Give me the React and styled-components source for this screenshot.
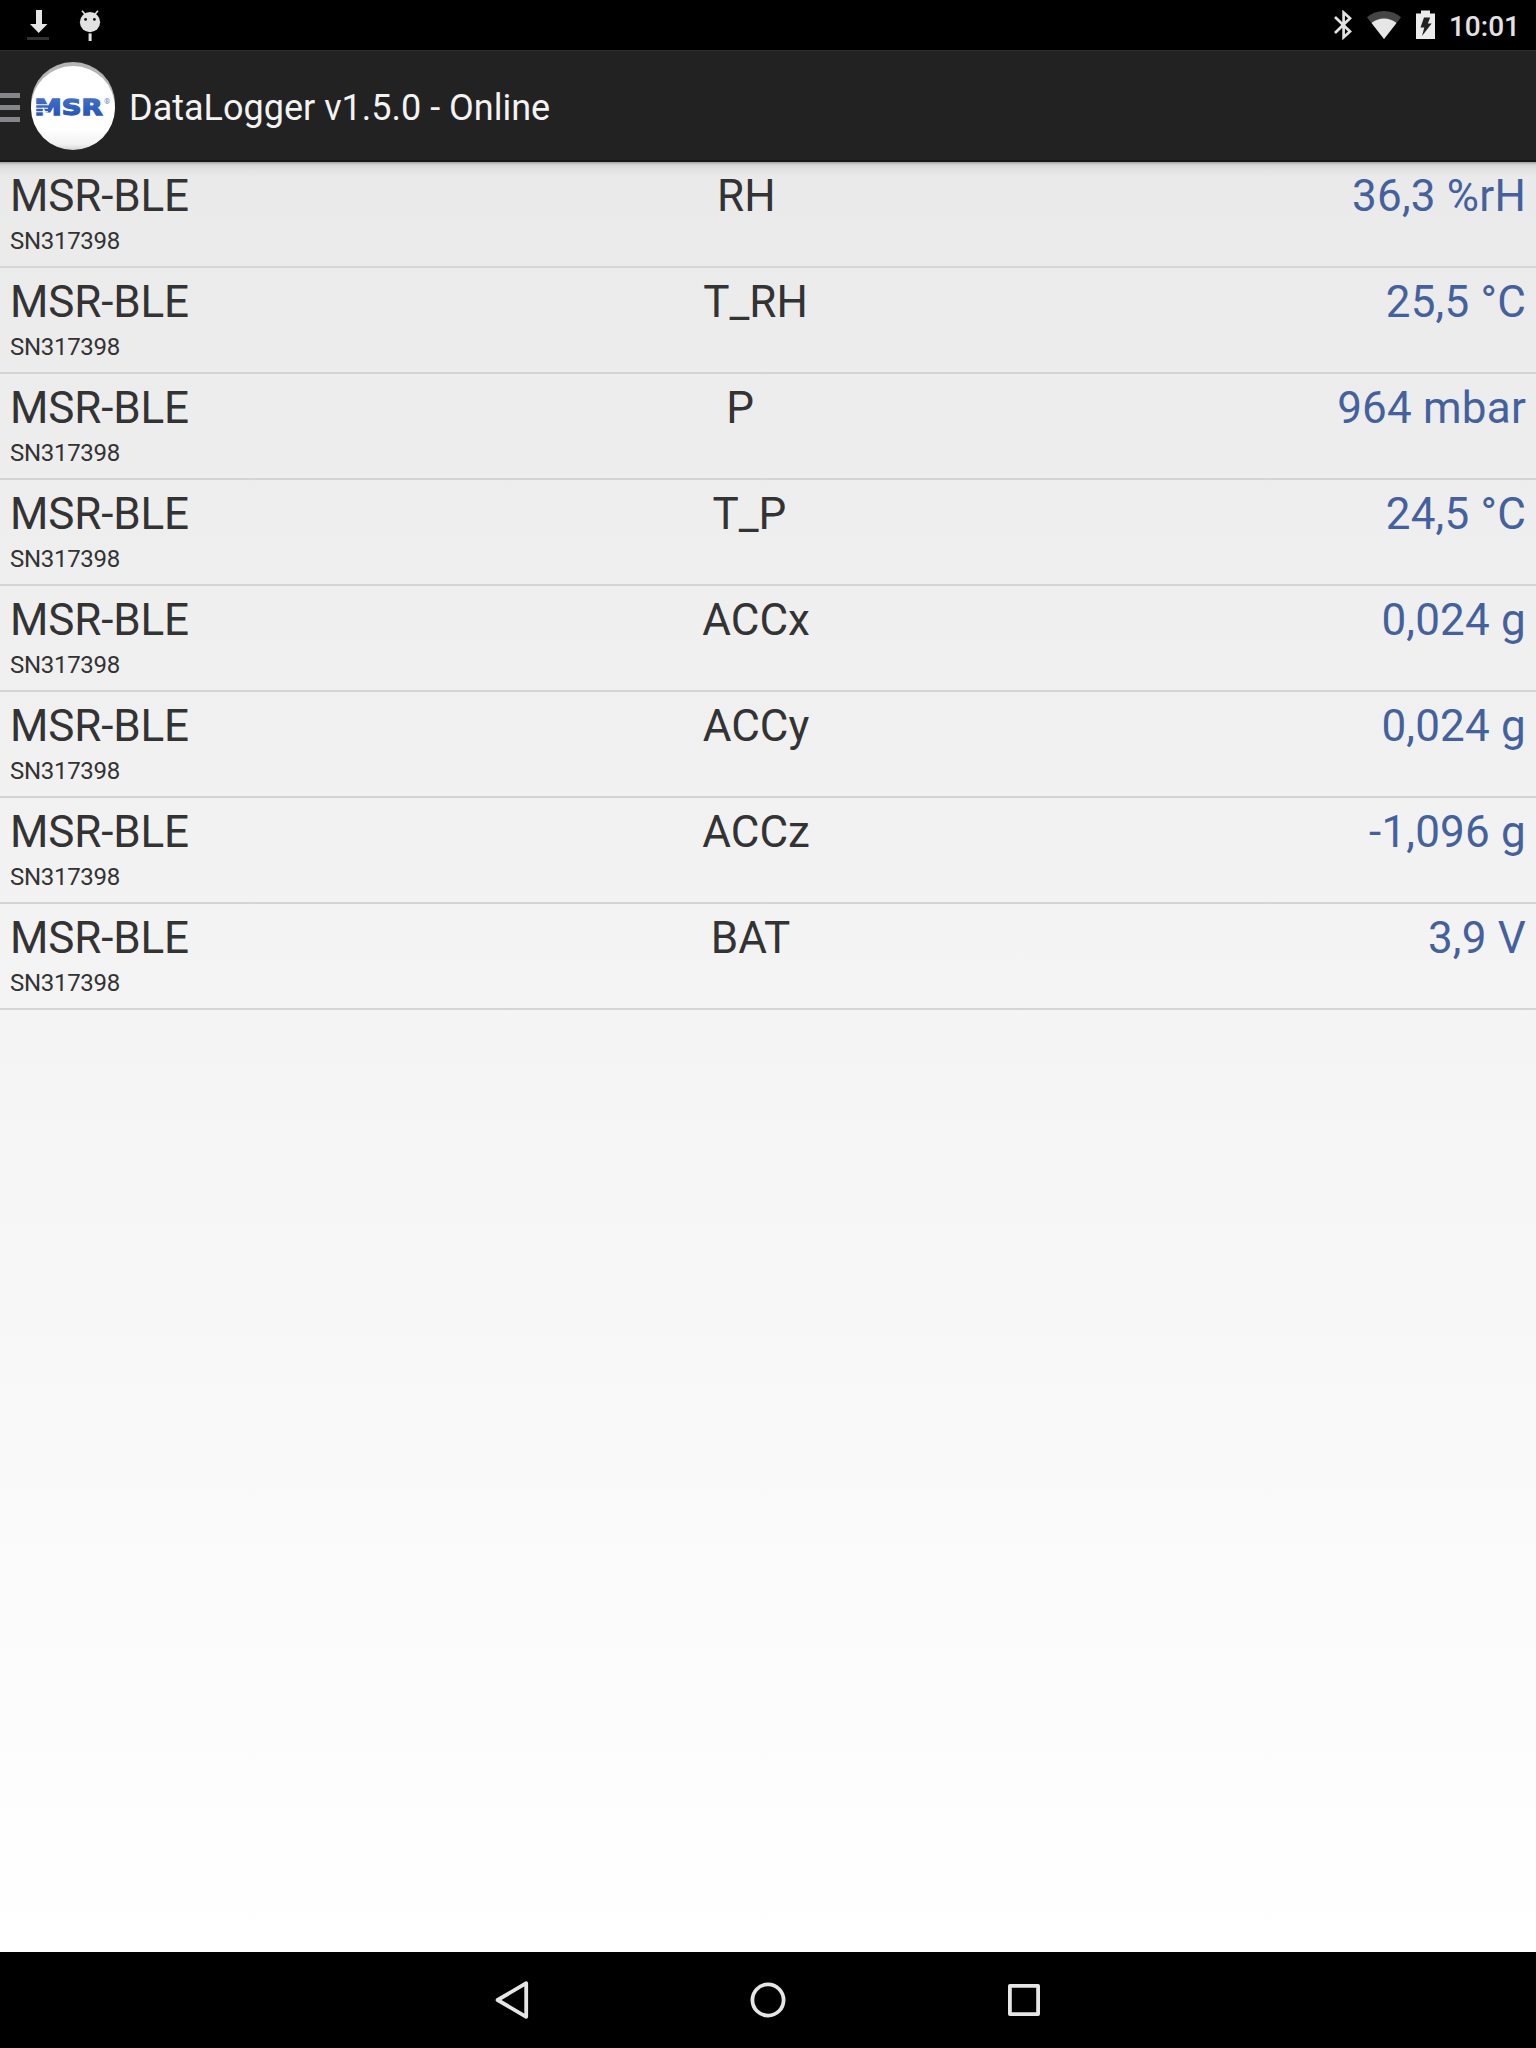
import styled, { createGlobalStyle } from 'styled-components';

const readings = [
  { id: 1, channel: 'RH', value: '36,3 %rH' },
  { id: 2, channel: 'T_RH', value: '25,5 °C' },
  { id: 3, channel: 'P', value: '964 mbar' },
  { id: 4, channel: 'T_P', value: '24,5 °C' },
  { id: 5, channel: 'ACCx', value: '0,024 g' },
  { id: 6, channel: 'ACCy', value: '0,024 g' },
  { id: 7, channel: 'ACCz', value: '-1,096 g' },
  { id: 8, channel: 'BAT', value: '3,9 V' },
];

function StatusBar() {
  return (
    <StatusDiv>
      <svg width='22' height='30' viewBox='0 0 22 30'>
        <path d='M9 0h6v14h5.5L11.7 23 3 14h6z' fill='#e6e6e6' />
        <rect x='0' y='27' width='22' height='3' fill='#303030' />
      </svg>
      <svg width='22' height='32' viewBox='0 0 22 32'>
        <g fill='#e2e2e2'>
          <circle cx='11' cy='12.2' r='10.1' />
          <path d='M3 0.8l3.5 4M19 0.8l-3.5 4' stroke='#e2e2e2' strokeWidth='1.6' />
          <rect x='9.6' y='23.4' width='3' height='7.6' />
        </g>
        <circle cx='6.6' cy='9.4' r='1.4' fill='#111' />
        <circle cx='15.4' cy='9.4' r='1.4' fill='#111' />
      </svg>
      <Spacer />
      <StatusIcons>
        <svg width='18' height='30' viewBox='0 0 18 30'>
          <path
            d='M1 7L16 21.5 9.6 27.3V2.5L16 8.3 1 23'
            fill='none'
            stroke='#e2e2e2'
            strokeWidth='2.7'
          />
        </svg>
        <svg width='34' height='30' viewBox='0 0 34 30'>
          <path d='M17 29L0 7.3C9.5-1.2 24.5-1.2 34 7.3z' fill='#454545' />
          <path d='M17 29L4.5 13C11.5 7 22.5 7 29.5 13z' fill='#e6e6e6' />
        </svg>
        <svg width='19' height='30' viewBox='0 0 19 30'>
          <path d='M5 0.5h9v3h5V29H0V3.5h5z' fill='#ececec' />
          <path d='M8 7.5h6.2l-2.4 6h3.9L6 26l2.3-8.5H4.5z' fill='#222' />
        </svg>
      </StatusIcons>
      <Clock>10:01</Clock>
    </StatusDiv>
  );
}

function Logo() {
  return (
    <LogoSvg width='84' height='90' viewBox='0 0 84 90'>
      <defs>
        <linearGradient id='disc' x1='0' y1='0' x2='0' y2='1'>
          <stop offset='0.75' stopColor='#fff' />
          <stop offset='0.93' stopColor='#f2f2f2' />
          <stop offset='1' stopColor='#d4d4d4' />
        </linearGradient>
        <linearGradient id='ink' x1='0' y1='0' x2='0' y2='1'>
          <stop offset='0' stopColor='#4a74c4' />
          <stop offset='1' stopColor='#1f50b8' />
        </linearGradient>
      </defs>
      <circle cx='42' cy='42' r='42' fill='#b4b4b4' />
      <circle cx='42' cy='46' r='42' fill='url(#disc)' />
      <LogoText
        x='3.5'
        y='52.5'
        textLength='68'
        lengthAdjust='spacingAndGlyphs'
        fill='url(#ink)'
        stroke='url(#ink)'
      >
        MSR
      </LogoText>
      <path d='M4 42.7h13M4 46.2h13M4 49.7h13' stroke='#fff' strokeWidth='1.1' />
      <Registered x='73' y='41.5'>
        ®
      </Registered>
    </LogoSvg>
  );
}

function Row({ reading }) {
  return (
    <RowDiv>
      <Device>
        <Name>MSR-BLE</Name>
        <Serial>SN317398</Serial>
      </Device>
      <Channel>{reading.channel}</Channel>
      <Value>{reading.value}</Value>
    </RowDiv>
  );
}

function NavBar() {
  return (
    <NavDiv>
      <NavButton aria-label='back'>
        <svg width='40' height='40' viewBox='0 0 40 40'>
          <path d='M34.2 3.2v33.6L5.6 20z' />
        </svg>
      </NavButton>
      <NavButton aria-label='home'>
        <svg width='40' height='40' viewBox='0 0 40 40'>
          <circle cx='20' cy='20' r='15.6' />
        </svg>
      </NavButton>
      <NavButton aria-label='recent'>
        <svg width='40' height='40' viewBox='0 0 40 40'>
          <rect x='5.9' y='5.9' width='28.2' height='28.2' />
        </svg>
      </NavButton>
    </NavDiv>
  );
}

function App() {
  return (
    <>
      <GlobalStyle />
      <Screen>
        <StatusBar />
        <ActionBar>
          <Drawer>
            <span />
            <span />
            <span />
          </Drawer>
          <Logo />
          <Title>DataLogger v1.5.0 - Online</Title>
        </ActionBar>
        <List>
          {readings.map((el) => (
            <Row key={el.id} reading={el} />
          ))}
        </List>
        <NavBar />
      </Screen>
    </>
  );
}

export default App;

const GlobalStyle = createGlobalStyle`
  * {
    box-sizing: border-box;
  }
  body {
    margin: 0;
    font-family: Roboto, sans-serif;
  }
  svg {
    display: block;
    flex-shrink: 0;
  }
`;

const Screen = styled.div`
  display: flex;
  flex-direction: column;
  width: 1536px;
  height: 2048px;
  overflow: hidden;
  background: linear-gradient(#e8e8e8, #ffffff 1952px);
`;

const StatusDiv = styled.div`
  display: flex;
  align-items: flex-start;
  height: 50px;
  padding: 10px 16px 0 27px;
  background-color: #000;
  > svg + svg {
    margin-left: 30px;
  }
`;

const Spacer = styled.div`
  flex: 1;
`;

const StatusIcons = styled.div`
  display: flex;
  gap: 15px;
  margin-right: 14px;
`;

const Clock = styled.span`
  font-size: 28px;
  font-weight: 500;
  line-height: 34px;
  color: #e2e2e2;
`;

const ActionBar = styled.div`
  display: flex;
  align-items: center;
  height: 112px;
  background-color: #222222;
  border-top: 1px solid #303030;
  border-bottom: 2px solid #181818;
`;

const Drawer = styled.div`
  display: flex;
  flex-direction: column;
  gap: 7px;
  width: 20px;
  margin: 4px 11px 0 0;
  span {
    height: 5px;
    background-color: #85868a;
  }
`;

const Title = styled.h1`
  margin: 4px 0 0 14px;
  font-size: 36px;
  font-weight: 400;
  line-height: 42px;
  color: #f3f3f3;
`;

const LogoSvg = styled.svg`
  margin-top: 3px;
`;

const LogoText = styled.text`
  font-family: 'DejaVu Sans', sans-serif;
  font-size: 22px;
  font-weight: 700;
  stroke-width: 1.3px;
`;

const Registered = styled.text`
  font-size: 8px;
  fill: #5f83cc;
`;

const List = styled.div`
  flex: 1;
  background: linear-gradient(
      rgba(0, 0, 0, 0.3),
      rgba(0, 0, 0, 0.08) 3px,
      rgba(0, 0, 0, 0.03) 8px,
      transparent 16px
    )
    no-repeat;
`;

const RowDiv = styled.div`
  display: flex;
  height: 106px;
  padding: 8px 10px 0;
  border-bottom: 2px solid #d4d4d4;
  font-size: 44px;
  line-height: 52px;
  color: #333333;
`;

const Device = styled.div`
  flex: 0.2 0 385.5px;
`;

const Name = styled.div`
  height: 52px;
  letter-spacing: -0.15px;
`;

const Serial = styled.div`
  font-size: 24px;
  line-height: 38px;
  letter-spacing: -0.3px;
`;

const Channel = styled.div`
  flex: 0.2 0 auto;
  text-align: center;
`;

const Value = styled.div`
  flex: 0.6 0 0;
  text-align: right;
  letter-spacing: 0.2px;
  color: #44619d;
`;

const NavDiv = styled.div`
  display: flex;
  justify-content: center;
  height: 96px;
  background-color: #000;
`;

const NavButton = styled.button`
  display: flex;
  align-items: center;
  justify-content: center;
  width: 256px;
  padding: 0;
  border: none;
  background: none;
  svg {
    fill: none;
    stroke: #e6e6e6;
    stroke-width: 3.8px;
    stroke-linejoin: round;
  }
`;
